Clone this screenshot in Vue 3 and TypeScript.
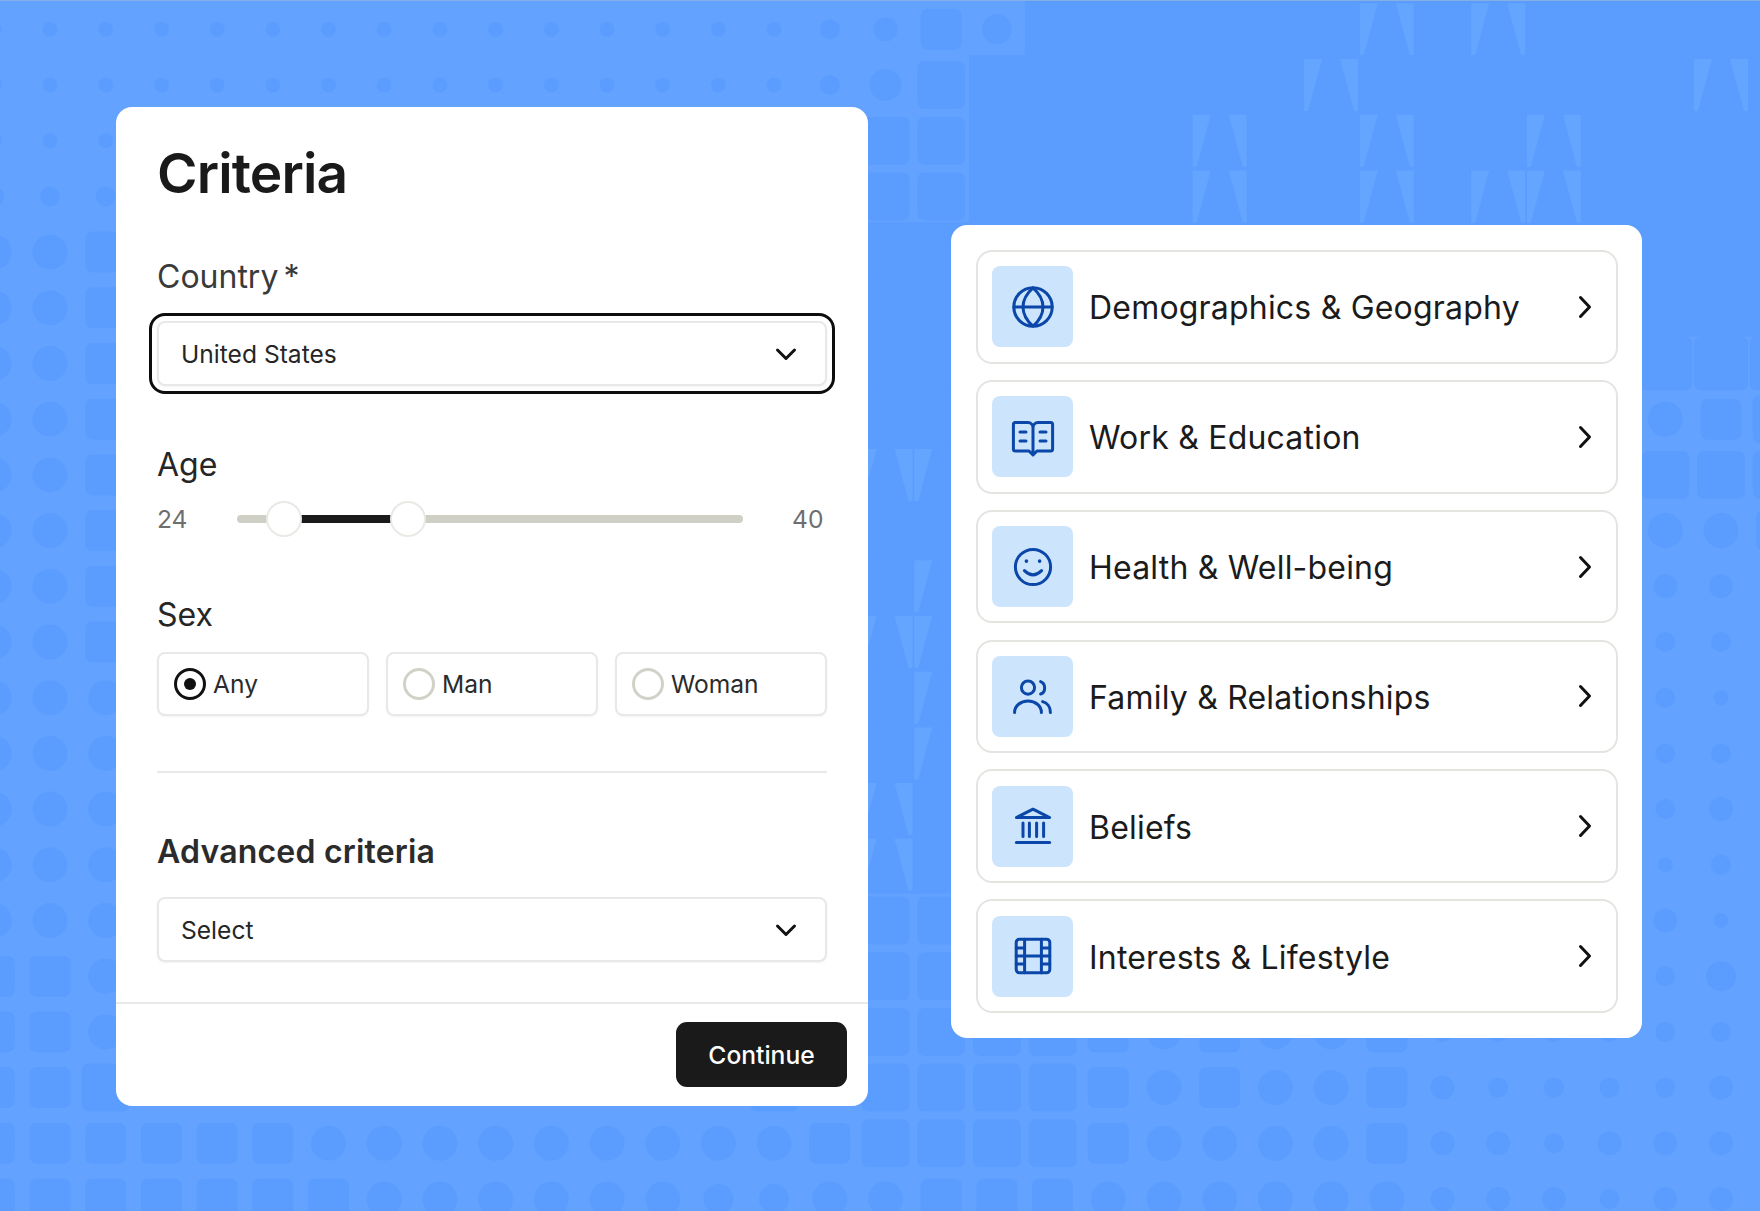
<script setup lang="ts">
import { ref } from 'vue'

// background pattern: one character per grid cell
const patternRows = [
  'aaaaaaaaaaaaaaab' + 'dse' + 'DDDDDDWDWDDDDD',
  'aaaaaaaaaaaaaaab' + 'FS' + 'DDDDDDWDDDDDDWD',
  'aaa.............' + 'SS' + 'DDDDWDDWDDWDDDD',
  'bbb.............' + 'SS' + 'DDDDWDDWDWWDDDD',
  'CCs.............' + 'DDDDDDDDDDDDDDDDD',
  'CCs.............' + 'DDDDDDDDDDDDDDDDD',
  'CCs.............' + 'DDDDDDDDDDDDDDBBB',
  'CCs.............' + 'DDDDDDDDDDDDDDCsS',
  'CCs.............' + 'WWDDDDDDDDDDDDSSS',
  'CCs.............' + 'DDDDDDDDDDDDDDCCs',
  'CCs.............' + 'DWDDDDDDDDDDDDdd.',
  'CCs.............' + 'WWDDDDDDDDDDDDbb.',
  'CCC.............' + 'DWDDDDDDDDDDDDba.',
  'CCC.............' + 'DWDDDDDDDDDDDDbb.',
  'CCC.............' + 'WDDDDDDDDDDDDDbd.',
  'CCC.............' + 'WDDDDDDDDDDDDDab.',
  'CCC.............' + 'SS............da.',
  'ssC.............' + 'SS............be.',
  'ssC.............' + 'SSSSsCsCCsbbbbbb.',
  'ssS...........S.' + 'SSSSsCsCCsdbbbbd.',
  'ssssssCCCCCCCCCs' + 'SSSSsCCCCsddbddd.',
  'sssssssCCCCCCeeC' + 'CsssCCCCCCdddbdd.',
]

const PITCH = 55.7
const START_X = -5.7
const START_Y = 29.3

const circleSize: Record<string, number> = { a: 15, b: 20, d: 24, e: 30, F: 32, C: 35 }
const squareSize: Record<string, number> = { s: 41, S: 48, B: 54 }

interface Shape {
  key: string
  kind: 'circle' | 'square' | 'cell' | 'wedge'
  x: number
  y: number
  size: number
  points?: string
}

const shapes: Shape[] = []
patternRows.forEach((row, r) => {
  row.split('').forEach((ch, c) => {
    const x = START_X + c * PITCH
    const y = START_Y + r * PITCH
    const key = `${r}-${c}`
    if (circleSize[ch]) {
      shapes.push({ key, kind: 'circle', x, y, size: circleSize[ch] })
    } else if (squareSize[ch]) {
      shapes.push({ key, kind: 'square', x, y, size: squareSize[ch] })
    } else if (ch === 'D' || ch === 'W') {
      shapes.push({ key, kind: 'cell', x, y, size: PITCH })
      if (ch === 'W') {
        const t = y - 26
        const b = y + 26
        shapes.push({
          key: key + 'w',
          kind: 'wedge',
          x,
          y,
          size: 0,
          points: `${x - 27},${t} ${x - 9},${t} ${x - 23},${b} ${x - 27},${b}`,
        })
        shapes.push({
          key: key + 'e',
          kind: 'wedge',
          x,
          y,
          size: 0,
          points: `${x + 9},${t} ${x + 27},${t} ${x + 27},${b} ${x + 23},${b}`,
        })
      }
    }
  })
})

const sexOptions = ['Any', 'Man', 'Woman']
const sex = ref('Any')

const categories = [
  { name: 'Demographics & Geography', icon: 'globe' },
  { name: 'Work & Education', icon: 'book' },
  { name: 'Health & Well-being', icon: 'smile' },
  { name: 'Family & Relationships', icon: 'users' },
  { name: 'Beliefs', icon: 'bank' },
  { name: 'Interests & Lifestyle', icon: 'film' },
]
</script>

<template>
  <div class="page">
    <svg class="pattern" width="1760" height="1211" viewBox="0 0 1760 1211" aria-hidden="true">
      <rect width="1760" height="1211" fill="#63a3ff" />
      <template v-for="s in shapes" :key="s.key">
        <circle v-if="s.kind === 'circle'" :cx="s.x" :cy="s.y" :r="s.size / 2" fill="#5b9cff" />
        <rect
          v-else-if="s.kind === 'square'"
          :x="s.x - s.size / 2"
          :y="s.y - s.size / 2"
          :width="s.size"
          :height="s.size"
          rx="7"
          fill="#5b9cff"
        />
        <rect
          v-else-if="s.kind === 'cell'"
          :x="s.x - s.size / 2"
          :y="s.y - s.size / 2 - 2"
          :width="s.size + 1"
          :height="s.size + 3"
          fill="#5b9cff"
        />
      </template>
      <template v-for="s in shapes" :key="s.key + 'top'">
        <polygon v-if="s.kind === 'wedge'" :points="s.points" fill="#64a5ff" />
      </template>
      <rect width="1760" height="1" fill="#84aee6" />
    </svg>

    <section class="card criteria">
      <div class="criteria-body">
        <h1 class="title">Criteria</h1>

        <label class="field-label country-label">Country<span class="star">*</span></label>
        <div class="focus-ring">
          <div class="select">
            <span>United States</span>
            <svg class="chevron" width="24" height="24" viewBox="0 0 24 24" fill="none">
              <path d="M3.5 8 12 16.5 20.5 8" stroke="#111" stroke-width="3" stroke-linecap="round" stroke-linejoin="round" />
            </svg>
          </div>
        </div>

        <label class="field-label age-label">Age</label>
        <div class="slider-row">
          <span class="slider-value">24</span>
          <div class="track">
            <div class="track-fill"></div>
            <div class="thumb thumb-low"></div>
            <div class="thumb thumb-high"></div>
          </div>
          <span class="slider-value end">40</span>
        </div>

        <label class="field-label sex-label">Sex</label>
        <div class="radio-group">
          <div v-for="opt in sexOptions" :key="opt" class="radio-box" @click="sex = opt">
            <span class="radio" :class="{ checked: sex === opt }"></span>
            <span>{{ opt }}</span>
          </div>
        </div>

        <div class="divider"></div>

        <h2 class="subtitle">Advanced criteria</h2>
        <div class="select">
          <span>Select</span>
          <svg class="chevron" width="24" height="24" viewBox="0 0 24 24" fill="none">
            <path d="M3.5 8 12 16.5 20.5 8" stroke="#111" stroke-width="3" stroke-linecap="round" stroke-linejoin="round" />
          </svg>
        </div>
      </div>

      <div class="criteria-footer">
        <button class="continue-btn">Continue</button>
      </div>
    </section>

    <section class="card categories">
      <div v-for="cat in categories" :key="cat.name" class="category">
        <div class="icon-box">
          <svg width="48" height="48" viewBox="0 0 24 24" fill="none" stroke="#0b47a8" stroke-width="1.5" stroke-linecap="round" stroke-linejoin="round">
            <template v-if="cat.icon === 'globe'">
              <circle cx="12" cy="12" r="9.6" />
              <path d="M2.4 12h19.2" />
              <path d="M12 2.4c3.2 2.8 5 6 5 9.6s-1.8 6.8-5 9.6c-3.2-2.8-5-6-5-9.6s1.8-6.8 5-9.6z" />
            </template>
            <template v-else-if="cat.icon === 'book'">
              <path d="M12 7.5C12 6 11 4.8 9.5 4.8H3.2a1 1 0 0 0-1 1V18a1 1 0 0 0 1 1H10l2 2 2-2h6.8a1 1 0 0 0 1-1V5.8a1 1 0 0 0-1-1H14.5C13 4.8 12 6 12 7.5V20.5" />
              <path d="M5.5 9.5h3M5.5 14h3M15.5 9.5h3M15.5 14h3" />
            </template>
            <template v-else-if="cat.icon === 'smile'">
              <circle cx="12" cy="12" r="8.8" />
              <path d="M7.7 13.8q4.3 4.2 8.6 0" />
              <path d="M8.7 9v.1M15.3 9v.1" stroke-width="1.8" />
            </template>
            <template v-else-if="cat.icon === 'users'">
              <circle cx="9.5" cy="7.8" r="3.3" />
              <path d="M15.8 4.8c2.7 1 2.7 5.3 0 6.2" />
              <path d="M2.8 20.2c0-3.300 3-5.700 6.700-5.700s6.700 2.400 6.700 5.700" />
              <path d="M16.800 14.800c2.300.6 3.900 2.700 3.900 5.400" />
            </template>
            <template v-else-if="cat.icon === 'bank'">
              <path d="M3.7 7.800 12 3.600l8.300 4.200z" />
              <path d="M7 10.500v6.800M10.200 10.500v6.800M13.800 10.500v6.800M17.300 10.500v6.800" />
              <path d="M3.700 20.300h16.600" />
            </template>
            <template v-else>
              <rect x="3.6" y="3.6" width="16.8" height="16.8" rx="1.6" />
              <path d="M7.800 3.600v16.800M16.200 3.600v16.800M3.600 8h4.200M3.600 12h16.800M3.600 16h4.200M16.200 8h4.200M16.200 16h4.200" />
            </template>
          </svg>
        </div>
        <span class="category-name">{{ cat.name }}</span>
        <svg class="arrow" width="24" height="24" viewBox="0 0 24 24" fill="none">
          <path d="M7.5 2.5 16.5 12 7.5 21.5" stroke="#111" stroke-width="3" stroke-linecap="round" stroke-linejoin="round" />
        </svg>
      </div>
    </section>
  </div>
</template>

<style scoped>
.page {
  position: relative;
  width: 1760px;
  height: 1211px;
  overflow: hidden;
  display: flex;
  align-items: flex-start;
  gap: 83px;
  padding: 107px 0 0 116px;
  box-sizing: border-box;
  font-family: Inter, "Liberation Sans", sans-serif;
  color: #1b1b1b;
}

.pattern {
  position: absolute;
  left: 0;
  top: 0;
}

.card {
  position: relative;
  background: #fff;
  border-radius: 16px;
  box-sizing: border-box;
}

.criteria {
  width: 752px;
  height: 999px;
  display: flex;
  flex-direction: column;
}

.criteria-body {
  flex: 1;
  padding: 34px 41px 0;
}

.title {
  margin: 0;
  font-size: 55px;
  line-height: 64px;
  font-weight: 600;
  letter-spacing: -0.85px;
  color: #1a1a1a;
}

.field-label {
  display: block;
  font-size: 32px;
  line-height: 40px;
  color: #262626;
}

.country-label {
  margin-top: 52px;
  color: #3a3a3a;
}

.star {
  margin-left: 5px;
}

.focus-ring {
  margin: 16px -8px 0;
  padding: 5px;
  border: 3px solid #0d0d0d;
  border-radius: 16px;
}

.select {
  display: flex;
  align-items: center;
  justify-content: space-between;
  height: 65px;
  padding: 0 27px 0 22px;
  box-sizing: border-box;
  border: 2px solid #e8e8e6;
  border-radius: 8px;
  background: #fff;
  box-shadow: 0 1px 2px rgba(0, 0, 0, 0.05);
  font-size: 24.6px;
  color: #262626;
}

.age-label {
  margin-top: 51px;
}

.slider-row {
  display: flex;
  align-items: center;
  height: 36px;
  margin-top: 16px;
}

.slider-value {
  width: 80px;
  font-size: 24.6px;
  color: #6e6e6e;
}

.slider-value.end {
  width: 84px;
  box-sizing: border-box;
  padding-left: 49px;
}

.track {
  position: relative;
  flex: 1;
  height: 8px;
  border-radius: 4px;
  background: #cfcfc6;
}

.track-fill {
  position: absolute;
  left: 47px;
  width: 124px;
  top: 0;
  bottom: 0;
  background: #1a1a1a;
}

.thumb {
  position: absolute;
  top: -14px;
  width: 36px;
  height: 36px;
  box-sizing: border-box;
  background: #fff;
  border: 2px solid #e9e9e5;
  border-radius: 50%;
}

.thumb-low {
  left: 29px;
}

.thumb-high {
  left: 153px;
}

.sex-label {
  margin-top: 58px;
}

.radio-group {
  display: grid;
  grid-template-columns: repeat(3, 1fr);
  gap: 17px;
  margin-top: 17px;
}

.radio-box {
  display: flex;
  align-items: center;
  gap: 7px;
  height: 64px;
  padding-left: 15px;
  box-sizing: border-box;
  border: 2px solid #e8e8e6;
  border-radius: 8px;
  box-shadow: 0 1px 2px rgba(0, 0, 0, 0.05);
  font-size: 24.6px;
  color: #2b2b2b;
}

.radio {
  position: relative;
  width: 32px;
  height: 32px;
  box-sizing: border-box;
  border: 3px solid #d2d1c8;
  border-radius: 50%;
}

.radio.checked {
  border-color: #111;
}

.radio.checked::after {
  content: "";
  position: absolute;
  left: 7px;
  top: 7px;
  width: 12px;
  height: 12px;
  border-radius: 50%;
  background: #111;
}

.divider {
  height: 2px;
  margin-top: 55px;
  background: #e9e9e7;
}

.subtitle {
  margin: 59px 0 25px;
  font-size: 32px;
  line-height: 40px;
  font-weight: 600;
  letter-spacing: 0.2px;
  color: #2b2b2b;
}

.criteria-footer {
  display: flex;
  justify-content: flex-end;
  height: 104px;
  padding: 18px 21px 0 0;
  box-sizing: border-box;
  border-top: 2px solid #e9e9e7;
}

.continue-btn {
  width: 171px;
  height: 65px;
  border: none;
  border-radius: 11px;
  background: #1a1a1a;
  color: #fff;
  font-family: inherit;
  font-size: 24.6px;
  font-weight: 500;
}

.categories {
  width: 691px;
  height: 813px;
  margin-top: 118px;
  padding: 25px 24px 25px 25px;
  display: flex;
  flex-direction: column;
  gap: 16.2px;
}

.category {
  display: flex;
  align-items: center;
  height: 114px;
  padding: 0 14px;
  box-sizing: border-box;
  border: 2px solid #e4e4e0;
  border-radius: 16px;
}

.icon-box {
  display: flex;
  align-items: center;
  justify-content: center;
  width: 81px;
  height: 81px;
  flex: none;
  border-radius: 8px;
  background: #cce5fd;
}

.category-name {
  flex: 1;
  margin-left: 16px;
  padding-top: 2px;
  font-size: 32px;
  letter-spacing: 0.2px;
  color: #1b1b1b;
}

.arrow {
  flex: none;
  margin-right: 5px;
}
</style>

<style>
html,
body {
  margin: 0;
}
</style>
